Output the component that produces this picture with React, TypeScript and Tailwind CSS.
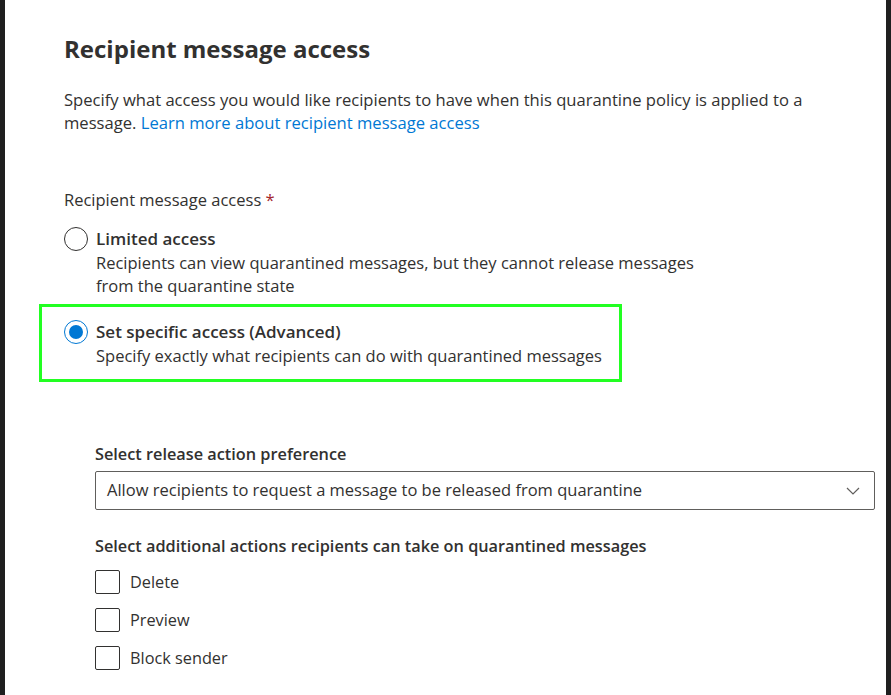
import React from "react";

const font = { fontFamily: '"Open Sans", "Noto Sans", sans-serif' };

function Radio({ checked }: { checked?: boolean }) {
  return (
    <span
      className={
        "flex h-[24px] w-[24px] shrink-0 items-center justify-center rounded-full border " +
        (checked ? "border-[#0078d4]" : "border-[#323130]")
      }
    >
      {checked && <span className="h-[14px] w-[14px] rounded-full bg-[#0078d4]" />}
    </span>
  );
}

function Checkbox({ label }: { label: string }) {
  return (
    <label className="flex h-[38px] items-center gap-[10px]">
      <span className="h-[24px] w-[25px] rounded-[2px] border border-[#323130]" />
      <span className="text-[16.3px] text-[#323130]">{label}</span>
    </label>
  );
}

export default function App() {
  return (
    <div className="flex h-[695px] w-[891px] overflow-hidden bg-white" style={font}>
      <div className="w-[5px] bg-[#1f1f1f]" />
      <main className="flex-1 pl-[59px] pr-[11px] text-[#323130]">
        <h1 className="mt-[31px] text-[24px] font-bold leading-[36px]">Recipient message access</h1>

        <p className="mt-[21px] text-[16.6px] leading-[23px]">
          Specify what access you would like recipients to have when this quarantine policy is applied to a
          <br />
          message. <a className="text-[#0078d4]">Learn more about recipient message access</a>
        </p>

        <div className="mt-[54px] text-[16.5px] leading-[24px]">
          Recipient message access <span className="text-[#a4262c]">*</span>
        </div>

        <div className="mt-[14px] flex gap-[8px]">
          <div className="pt-[1px]">
            <Radio />
          </div>
          <div>
            <div className="text-[17px] font-semibold leading-[25px]">Limited access</div>
            <div className="text-[16.5px] leading-[23px]">
              Recipients can view quarantined messages, but they cannot release messages
              <br />
              from the quarantine state
            </div>
          </div>
        </div>

        <div className="ml-[-25px] mt-[7px] flex w-[583px] gap-[8px] border-[3px] border-[#22ff22] pb-[12px] pl-[22px] pt-[12px]">
          <div className="pt-[1px]">
            <Radio checked />
          </div>
          <div>
            <div className="text-[17px] font-semibold leading-[25px]">Set specific access (Advanced)</div>
            <div className="text-[16.5px] leading-[23px]">Specify exactly what recipients can do with quarantined messages</div>
          </div>
        </div>

        <div className="ml-[31px]">
          <div className="mt-[60px] text-[16.3px] font-semibold leading-[24px]">Select release action preference</div>
          <div className="mt-[5px] flex h-[39px] items-center justify-between rounded-[2px] border border-[#605e5c] pl-[11px] pr-[14px]">
            <span className="text-[16.5px]">Allow recipients to request a message to be released from quarantine</span>
            <svg width="14" height="8" viewBox="0 0 14 8" fill="none">
              <path d="M1 1l6 6 6-6" stroke="#605e5c" strokeWidth="1.2" />
            </svg>
          </div>

          <div className="mt-[24px] text-[16.3px] font-semibold leading-[24px]">
            Select additional actions recipients can take on quarantined messages
          </div>
          <div className="mt-[5px] flex flex-col">
            <Checkbox label="Delete" />
            <Checkbox label="Preview" />
            <Checkbox label="Block sender" />
          </div>
        </div>
      </main>
      <div className="w-[5px] bg-[#1f1f1f]" />
    </div>
  );
}
